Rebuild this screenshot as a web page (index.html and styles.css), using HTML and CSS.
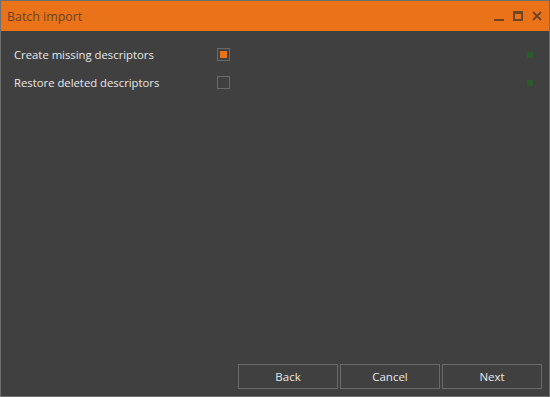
FILE: index.html
```html
<!DOCTYPE html>
<html>
<head>
<meta charset="utf-8">
<link rel="stylesheet" href="styles.css">
</head>
<body>
<div class="window">
  <div class="titlebar">
    <span class="title">Batch import</span>
    <div class="controls">
      <svg class="ctl" width="12" height="12" viewBox="0 0 12 12"><rect x="1" y="8" width="10" height="2" fill="currentColor"/></svg>
      <svg class="ctl" width="12" height="12" viewBox="0 0 12 12"><path d="M1 0h10v10H1z M3 3v5h6V3z" fill="currentColor" fill-rule="evenodd"/></svg>
      <svg class="ctl" width="12" height="12" viewBox="0 0 12 12"><path d="M2 1L10 9M10 1L2 9" stroke="currentColor" stroke-width="1.8"/></svg>
    </div>
  </div>
  <div class="content">
    <div class="options">
      <div class="row">
        <span class="label">Create missing descriptors</span>
        <span class="check checked"><span class="mark"></span></span>
        <span class="status"></span>
      </div>
      <div class="row">
        <span class="label">Restore deleted descriptors</span>
        <span class="check"></span>
        <span class="status"></span>
      </div>
    </div>
    <div class="footer">
      <button class="btn">Back</button>
      <button class="btn">Cancel</button>
      <button class="btn">Next</button>
    </div>
  </div>
</div>
</body>
</html>
```

FILE: styles.css
```css
* { box-sizing: border-box; }
html, body { margin: 0; padding: 0; }
body {
  width: 550px;
  height: 397px;
  background: #404040;
  font-family: "Open Sans", "Noto Sans", sans-serif;
}
.window {
  width: 550px;
  height: 397px;
  border: 1px solid #6e6e6e;
  display: flex;
  flex-direction: column;
  background: #404040;
}
.titlebar {
  height: 30px;
  background: #ea7219;
  display: flex;
  align-items: center;
  padding: 0 6px 0 6px;
  flex: none;
}
.title {
  font-size: 12.4px;
  color: #6b4220;
  font-weight: 400;
  margin-top: 1px;
}
.controls {
  margin-left: auto;
  display: flex;
  gap: 7px;
  color: #6e4522;
  margin-top: 2px;
}
.ctl { display: block; }
.content {
  flex: 1;
  display: flex;
  flex-direction: column;
  padding: 17px 7px 7px 13px;
}
.options {
  display: flex;
  flex-direction: column;
  gap: 15px;
}
.row {
  display: flex;
  align-items: center;
  height: 13px;
}
.label {
  width: 203px;
  font-size: 11.3px;
  color: #e8e8e8;
  white-space: nowrap;
}
.check {
  width: 13px;
  height: 13px;
  border: 1px solid #6a6a6a;
  padding: 2px;
  flex: none;
}
.mark {
  display: block;
  width: 7px;
  height: 7px;
  background: #ea7219;
}
.status {
  margin-left: auto;
  width: 6px;
  height: 6px;
  background: #2b5a2b;
  margin-right: 9px;
}
.footer {
  margin-top: auto;
  display: flex;
  justify-content: flex-end;
  gap: 2px;
}
.btn {
  width: 100px;
  height: 25px;
  background: #404040;
  border: 1px solid #6a6a6a;
  color: #e8e8e8;
  font-family: "Open Sans", "Noto Sans", sans-serif;
  font-size: 11.5px;
  padding: 0;
}
```
